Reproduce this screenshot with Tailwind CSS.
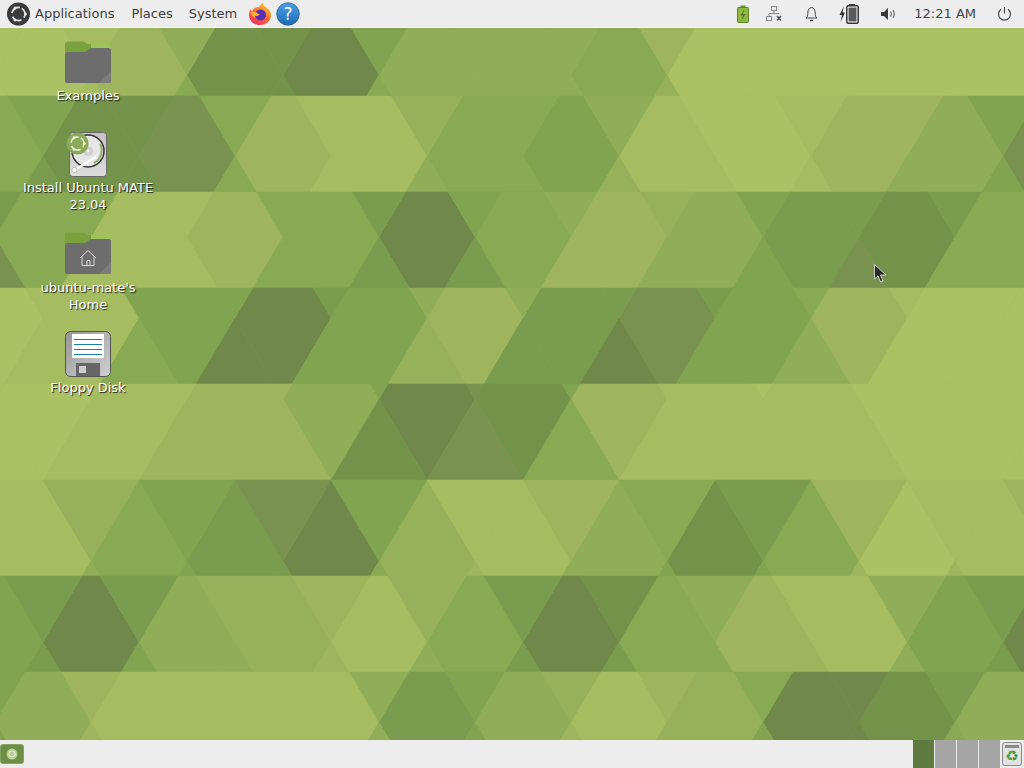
<!DOCTYPE html>
<html lang="en">
<head>
    <meta charset="UTF-8">
    <title>Ubuntu MATE desktop</title>
    <script src="https://cdn.jsdelivr.net/npm/@tailwindcss/browser@4"></script>
</head>
<body class="overflow-hidden">
<div class="relative w-[1024px] h-[768px] overflow-hidden flex flex-col font-['DejaVu_Sans',sans-serif] text-[13px] bg-[#a6bc60]">
    <svg id="wallpaper" class="absolute inset-0" width="1024" height="768" xmlns="http://www.w3.org/2000/svg"></svg>

    <!-- top panel -->
    <header class="relative h-[28px] shrink-0 flex items-center bg-[#ededed] text-[#3f3f3f] border-b border-[#f4f4f4]">
        <svg class="ml-[6px] w-[24px] h-[24px]" viewBox="0 0 24 24">
            <circle cx="12.5" cy="12" r="11.5" fill="#3a3a3a"/>
            <g transform="rotate(-60 12.5 12)">
                <circle cx="12.5" cy="12" r="6.5" fill="none" stroke="#e8e8e8" stroke-width="1.7" stroke-dasharray="10.4 3.2"/>
            </g>
            <circle cx="19.4" cy="12" r="1.5" fill="#e8e8e8"/>
            <circle cx="9" cy="6" r="1.5" fill="#e8e8e8"/>
            <circle cx="9" cy="18" r="1.5" fill="#e8e8e8"/>
        </svg>
        <span class="ml-[5px]">Applications</span>
        <span class="ml-[17px]">Places</span>
        <span class="ml-[16px]">System</span>
        <svg class="ml-[12px] w-[22px] h-[24px]" viewBox="0 0 22 24">
            <defs>
                <linearGradient id="fx" x1="0.8" y1="0" x2="0.2" y2="1">
                    <stop offset="0" stop-color="#ffd53a"/>
                    <stop offset="0.5" stop-color="#ff6a2a"/>
                    <stop offset="1" stop-color="#f02a68"/>
                </linearGradient>
            </defs>
            <path d="M11 23C4.5 23 0 18.500 0 13 0 10.500.8 8.500 2 7c0 1 .3 2 1 2.500C4.500 6.500 7 5 10 5c.5-1.500 2-3 4-4.500-.2 1.500.3 3 2 4 3.500 1.800 6 5 6 8.500 0 5.500-4.500 10-11 10z" fill="url(#fx)"/>
            <circle cx="11.500" cy="13" r="5.500" fill="#5a2fb8"/>
            <path d="M1.500 10.500c2-1 4-1 6 0 1 .5 1.500 1.500 3 1.700-.5 1.500-2 2-3.500 1.600-1.300-.3-1.500 1-.3 2-2.500-.6-4.800-2.300-5.200-5.300z" fill="#ffb02e"/>
        </svg>
        <svg class="ml-[5px] w-[24px] h-[24px]" viewBox="0 0 24 24">
            <defs>
                <linearGradient id="hp" x1="0" y1="0" x2="0" y2="1">
                    <stop offset="0" stop-color="#4d9fe3"/>
                    <stop offset="1" stop-color="#1d6ab5"/>
                </linearGradient>
            </defs>
            <circle cx="12" cy="12" r="11.300" fill="url(#hp)" stroke="#2a5d94" stroke-width="0.800"/>
            <text x="12" y="18" text-anchor="middle" font-size="17" fill="#fff" font-family="DejaVu Sans">?</text>
        </svg>

        <div class="ml-auto flex items-center">
            <!-- battery -->
            <svg class="w-[12px] h-[18px]" viewBox="0 0 12 18">
                <rect x="3.500" y="0.500" width="5" height="2" fill="#6d8f30"/>
                <rect x="0.500" y="2.500" width="11" height="15" rx="1" fill="#8fb83e" stroke="#607f2b"/>
                <path d="M7.500 4 3.500 10.500h2.500L4.500 15.500l4-6.500H6z" fill="#56722a"/>
            </svg>
            <!-- network, offline -->
            <svg class="ml-[17px] w-[16px] h-[15px]" viewBox="0 0 16 15" fill="none" stroke="#8a8a8a">
                <rect x="5.500" y="0.500" width="5" height="4"/>
                <rect x="0.500" y="10.500" width="5" height="4"/>
                <path d="M8 4.500v3M3 10.500v-3h10"/>
                <path d="M11 10l4 4.500M15 10l-4 4.500" stroke="#444" stroke-width="1.300"/>
            </svg>
            <!-- bell -->
            <svg class="ml-[22px] w-[15px] h-[16px]" viewBox="0 0 15 16" fill="none" stroke="#4a4a4a">
                <path d="M2 12c1.500-1 1.800-2.500 1.800-5 0-3 1.500-5.500 3.700-5.500s3.700 2.500 3.700 5.500c0 2.500.3 4 1.800 5z"/>
                <path d="M6 14.500h3" stroke-width="1.500"/>
            </svg>
            <!-- battery charging -->
            <svg class="ml-[20px] w-[20px] h-[20px]" viewBox="0 0 20 20">
                <path d="M5 2 0.500 11H3L1.500 18 6 8.500H3.500z" fill="#2e2e2e"/>
                <rect x="10" y="0" width="6" height="2" fill="#3a3a3a"/>
                <rect x="7.800" y="1.800" width="11.400" height="17.400" rx="1.500" fill="#fff" stroke="#333" stroke-width="1.500"/>
                <rect x="9.500" y="3.500" width="8" height="14" fill="#5a5a5a"/>
            </svg>
            <!-- speaker -->
            <svg class="ml-[22px] w-[15px] h-[12px]" viewBox="0 0 15 12" fill="none">
                <path d="M0 4h3l4-4v12l-4-4H0z" fill="#3a3a3a"/>
                <path d="M9.500 3.500q1.500 2.500 0 5M12 2q2.500 4 0 8" stroke="#6a6a6a" stroke-width="1.200"/>
            </svg>
            <span class="ml-[18px] text-[#3f4650]">12:21 AM</span>
            <!-- power -->
            <svg class="ml-[21px] mr-[12px] w-[15px] h-[15px]" viewBox="0 0 15 15" fill="none" stroke="#4a4a4a" stroke-width="1.200">
                <path d="M7.500 1v6.500"/>
                <path d="M4 3.200a6 6 0 1 0 7 0"/>
            </svg>
        </div>
    </header>

    <!-- desktop icons -->
    <main class="relative flex-1 min-h-0">
        <div class="w-[176px] flex flex-col items-center pt-[11px] text-white text-center leading-[17px] [text-shadow:1px_1px_1px_#222]">
            <div class="flex flex-col items-center mb-[26px]">
                <svg class="w-[48px] h-[48px]" viewBox="0 0 48 48">
                    <path d="M1 5.500q0-3 3-3h14q3 0 5 2.500h22q2 0 2 2v14H1z" fill="#79a13d"/>
                    <path d="M27 5h18q2 0 2 2v3H27z" fill="#9cc45a"/>
                    <path d="M1 16q0-3 3-3h16q2 0 4-2 2-2 4-2h17q2 0 2 2.500v30.500q0 2-2 2H3q-2 0-2-2z" fill="#6d6d6d"/>
                    <path d="M47 32v10q0 2-2 2H35z" fill="#7b7b7b"/>
                </svg>
                <span>Examples</span>
            </div>
            <div class="flex flex-col items-center mb-[17px]">
                <svg class="w-[48px] h-[48px]" viewBox="0 0 48 48">
                    <defs>
                        <linearGradient id="hd" x1="0" y1="0" x2="0" y2="1">
                            <stop offset="0" stop-color="#c4c4c4"/>
                            <stop offset="1" stop-color="#dcdcdc"/>
                        </linearGradient>
                    </defs>
                    <rect x="5.500" y="2.500" width="37" height="44" rx="3" fill="url(#hd)" stroke="#6a6a6a"/>
                    <circle cx="24" cy="21" r="16" fill="#e6e6e6" stroke="#333" stroke-width="1.500"/>
                    <path d="M36 14a14 14 0 0 1-6 19" fill="none" stroke="#8fae6a" stroke-width="2"/>
                    <circle cx="24" cy="21" r="5" fill="#cfcfcf"/>
                    <circle cx="24" cy="21" r="1.500" fill="#f4f4f4"/>
                    <path d="M11 40l21-13" stroke="#fff" stroke-width="2.500"/>
                    <circle cx="10.500" cy="40" r="2.500" fill="#fff" stroke="#888" stroke-width="0.500"/>
                    <circle cx="13.500" cy="13.500" r="11" fill="#8aaa58"/>
                    <g transform="rotate(-60 13.500 13.500)">
                        <circle cx="13.500" cy="13.500" r="6.500" fill="none" stroke="#eef3e2" stroke-width="1.500" stroke-dasharray="10.400 3.200"/>
                    </g>
                    <circle cx="20.400" cy="13.500" r="1.300" fill="#eef3e2"/>
                    <circle cx="10" cy="7.500" r="1.300" fill="#eef3e2"/>
                    <circle cx="10" cy="19.500" r="1.300" fill="#eef3e2"/>
                </svg>
                <span class="mt-px">Install Ubuntu MATE<br>23.04</span>
            </div>
            <div class="flex flex-col items-center mb-[17px]">
                <svg class="w-[48px] h-[48px]" viewBox="0 0 48 48">
                    <path d="M1 5.500q0-3 3-3h14q3 0 5 2.500h22q2 0 2 2v14H1z" fill="#79a13d"/>
                    <path d="M27 5h18q2 0 2 2v3H27z" fill="#9cc45a"/>
                    <path d="M1 16q0-3 3-3h16q2 0 4-2 2-2 4-2h17q2 0 2 2.500v30.500q0 2-2 2H3q-2 0-2-2z" fill="#6d6d6d"/>
                    <path d="M47 32v10q0 2-2 2H35z" fill="#7b7b7b"/>
                    <path d="M16 28l8-7.500 8 7.500M18 26.500v9h12v-9M23 35.500v-5h3v5" fill="none" stroke="#dcdcdc"/>
                </svg>
                <span class="mt-px">ubuntu-mate's<br>Home</span>
            </div>
            <div class="flex flex-col items-center">
                <svg class="w-[48px] h-[48px]" viewBox="0 0 48 48">
                    <defs>
                        <linearGradient id="fl" x1="0" y1="0" x2="1" y2="1">
                            <stop offset="0" stop-color="#969696"/>
                            <stop offset="1" stop-color="#d0d0d0"/>
                        </linearGradient>
                    </defs>
                    <rect x="1.500" y="1.500" width="45" height="45" rx="5" fill="url(#fl)" stroke="#555"/>
                    <rect x="8" y="4" width="32" height="24" fill="#fff"/>
                    <path d="M10 9.500h28M10 14.500h28M10 19.500h28M10 24.500h28" stroke="#1f7ab0"/>
                    <rect x="12" y="33" width="24" height="13" fill="#666"/>
                    <rect x="15" y="36" width="7" height="7" fill="#ccc"/>
                </svg>
                <span class="mt-px">Floppy Disk</span>
            </div>
        </div>
    </main>

    <!-- bottom panel -->
    <footer class="relative h-[28px] shrink-0 flex items-center bg-[#ededed]">
        <div class="w-[24px] h-[20px] rounded-[3px] bg-[#6c8f45] border border-[#86a364] flex items-center justify-center">
            <svg class="w-[12px] h-[12px]" viewBox="0 0 12 12">
                <circle cx="6" cy="6" r="5.500" fill="#b6cd90"/>
                <circle cx="6" cy="6" r="3" fill="none" stroke="#e8f0da" stroke-width="1.200" stroke-dasharray="4 0.800"/>
            </svg>
        </div>
        <div class="ml-auto flex h-full items-stretch">
            <div class="w-[21px] bg-[#5f7a3f]"></div>
            <div class="ml-px w-[21px] bg-[#a5a5a5]"></div>
            <div class="ml-px w-[21px] bg-[#a5a5a5]"></div>
            <div class="ml-px w-[21px] bg-[#a5a5a5]"></div>
        </div>
        <div class="ml-[2px] mr-[2px] w-[20px] h-[24px] rounded-[3px] border border-[#8a8a8a] bg-[#e2e2e2] flex flex-col items-center overflow-hidden">
            <div class="mt-[2px] w-[14px] h-[3px] bg-[#8a8a8a]"></div>
            <span class="text-[15px] leading-[17px] text-[#3f9a3f]">♻</span>
        </div>
    </footer>

    <!-- mouse pointer -->
    <svg class="absolute left-[873px] top-[263px] w-[14px] h-[21px]" viewBox="0 0 14 21">
        <path d="M1.500 1.500V16L5 12.800 7.600 19 10 18 7.500 12H13z" fill="#2a2a2a" stroke="#e8e8e8" stroke-width="0.800"/>
    </svg>
</div>

<script>
    // wallpaper: diagonal lattice cut into horizontal bands, one digit per cell
    const shades = {
        '0': '#abc163', '1': '#a6bc60', '2': '#9fb55d', '3': '#97b05a', '4': '#90ae57',
        '5': '#87aa53', '6': '#80a450', '7': '#7a9c4e', '8': '#79924f', '9': '#70894a', 'a': '#73934b'
    };

    const bands = [
        { y1: 28, y2: 96, yc: 75, x0: -5, up: '014a64420000', down: '015a54430000', mid: '02a944500000' },
        { y1: 96, y2: 192, yc: 156, x0: -53, up: '56a513540126', down: '57a514531146', mid: '5a8215610248' },
        { y1: 192, y2: 288, yc: 237, x0: -5, up: '751576436775', down: '811577246855', mid: '512595247a55' },
        { y1: 288, y2: 384, yc: 318, x0: -53, up: '116674477510', down: '115963796400', mid: '016962786200' },
        { y1: 384, y2: 480, yc: 399, x0: -5, up: '001268610000', down: '0122a8511100', mid: '01249a211000' },
        { y1: 480, y2: 576, yc: 561, x0: -5, up: '136861257212', down: '146752466222', mid: '1579314a5011' },
        { y1: 576, y2: 672, yc: 642, x0: -53, up: '6773237a4147', down: '676424775247', mid: '694315952169' },
        { y1: 672, y2: 740, yc: 722, x0: -5, up: '621146325974', down: '621146236954', mid: '411174139a44' }
    ];

    const wallpaper = document.getElementById('wallpaper');
    const slope = 48 / 81;

    function addCell(points, shade) {
        const cell = document.createElementNS('http://www.w3.org/2000/svg', 'polygon');
        cell.setAttribute('points', points.map(p => p.join(',')).join(' '));
        cell.setAttribute('fill', shades[shade]);
        cell.setAttribute('stroke', shades[shade]);
        cell.setAttribute('stroke-width', '0.4');
        wallpaper.appendChild(cell);
    }

    bands.forEach(band => {
        const { y1, y2, yc } = band;
        const dt = (yc - y1) * slope;
        const db = (y2 - yc) * slope;
        for (let i = 0; i < 12; i++) {
            const x = band.x0 + 96 * i;
            addCell([[x, yc], [x + dt, y1], [x + 96 - dt, y1], [x + 96, yc], [x + 96 - db, y2], [x + db, y2]], band.mid[i]);
            addCell([[x - dt, y1], [x + dt, y1], [x, yc]], band.up[i]);
            addCell([[x, yc], [x - db, y2], [x + db, y2]], band.down[i]);
        }
    });
</script>
</body>
</html>
